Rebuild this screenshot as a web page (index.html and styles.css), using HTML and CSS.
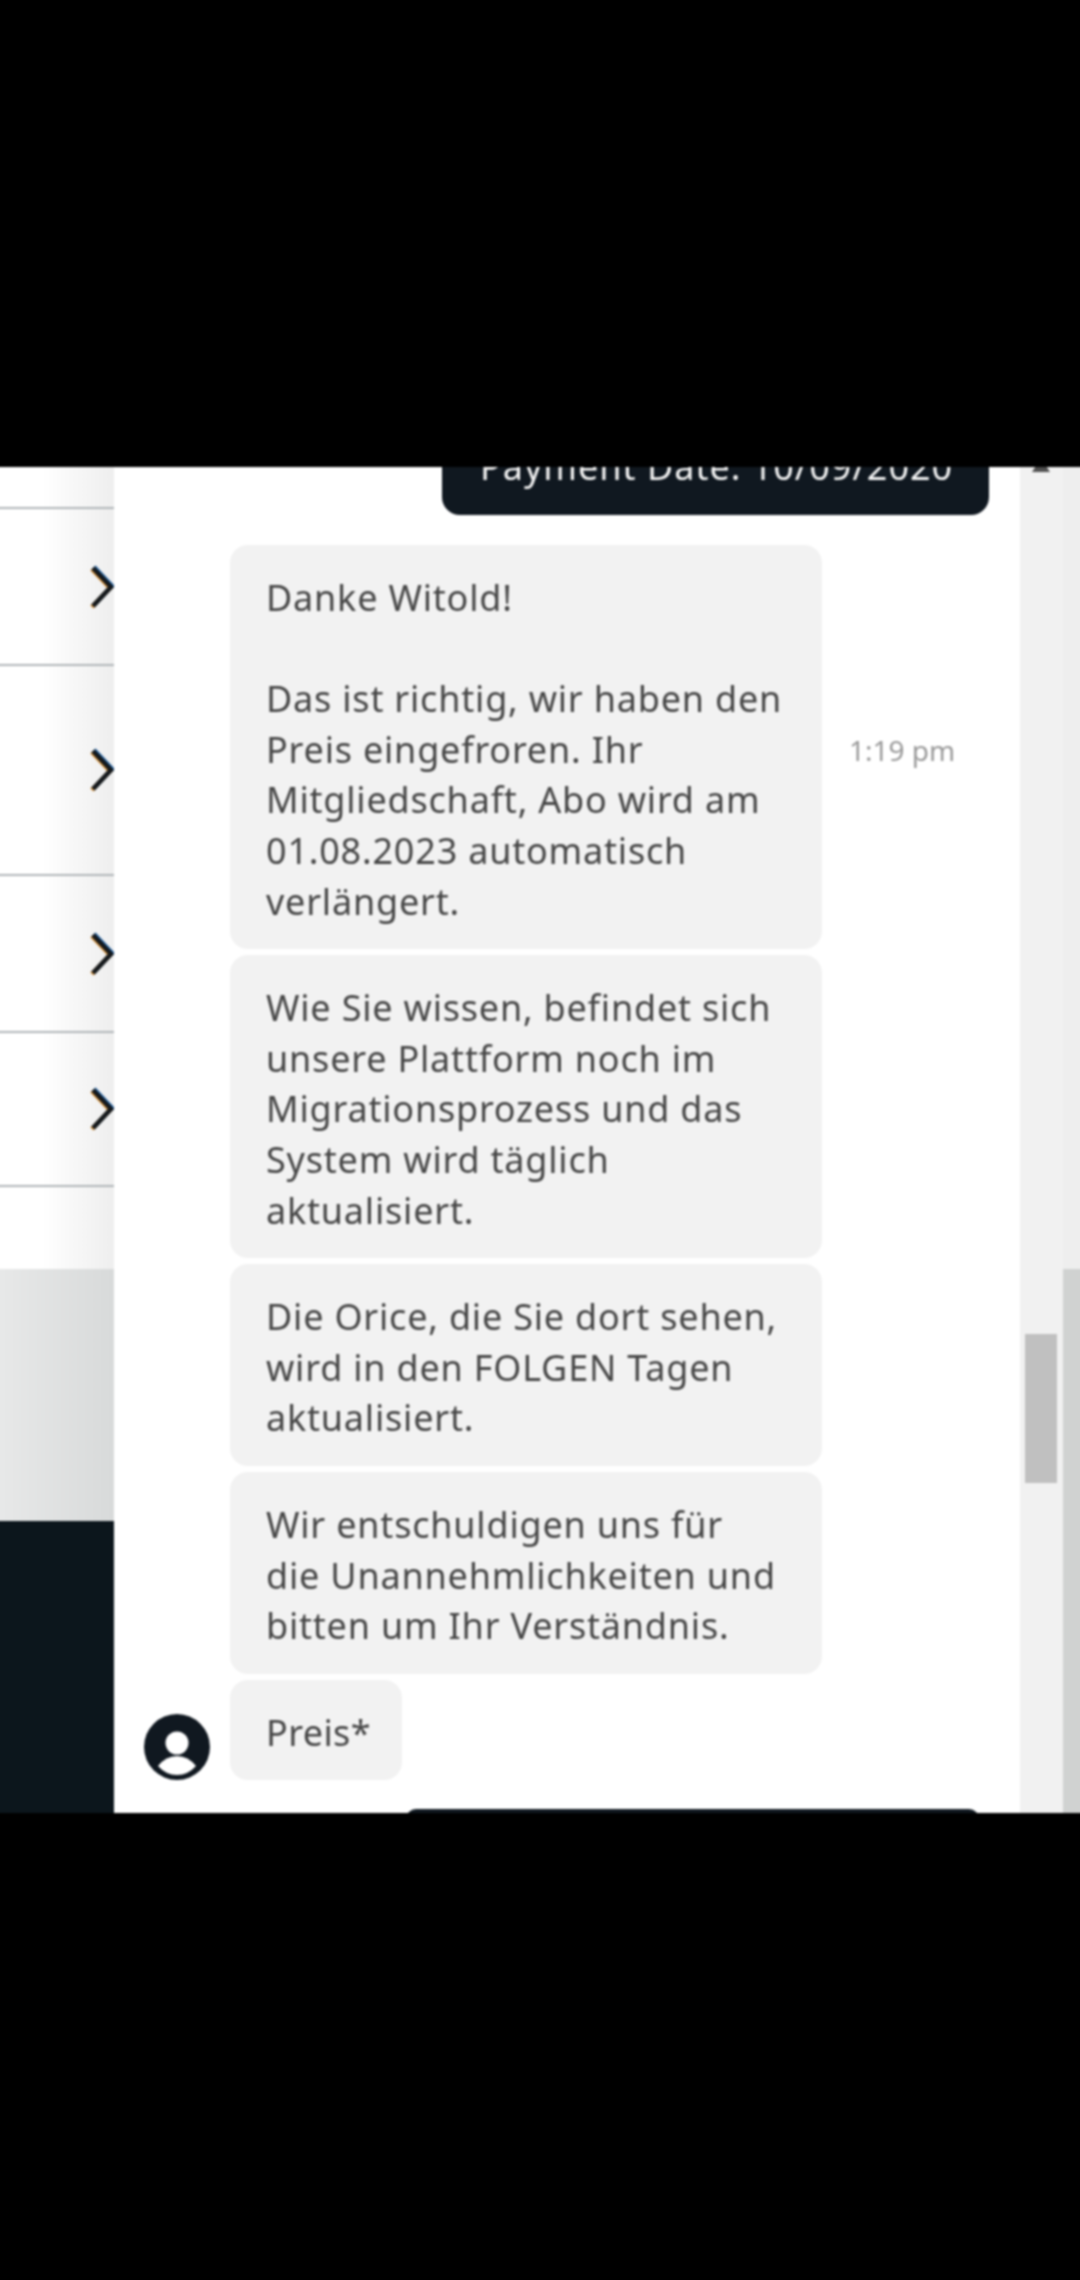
FILE: index.html
```html
<!DOCTYPE html>
<html lang="de">
<head>
    <meta charset="UTF-8">
    <meta name="viewport" content="width=device-width, initial-scale=1.0">
    <title>Chat</title>
    <link rel="stylesheet" href="styles.css">
</head>
<body>
    <div class="screen">
        <!-- Left list, cut off by the chat window -->
        <aside class="side">
            <div class="side-list">
                <div class="side-row row-first"></div>
                <div class="side-row row-a"><svg class="chevron" viewBox="0 0 24 44"><path d="M3 3 L21 22 L3 41"/></svg></div>
                <div class="side-row row-b"><svg class="chevron" viewBox="0 0 24 44"><path d="M3 3 L21 22 L3 41"/></svg></div>
                <div class="side-row row-a"><svg class="chevron" viewBox="0 0 24 44"><path d="M3 3 L21 22 L3 41"/></svg></div>
                <div class="side-row row-c"><svg class="chevron" viewBox="0 0 24 44"><path d="M3 3 L21 22 L3 41"/></svg></div>
            </div>
            <div class="side-grey"></div>
            <div class="side-dark"></div>
        </aside>

        <main class="chat">
            <div class="messages">
                <div class="bubble-own top-own">Payment Date: 10/09/2020</div>

                <div class="row">
                    <div class="bubble">Danke Witold!<br><br>Das ist richtig, wir haben den Preis eingefroren. Ihr Mitgliedschaft, Abo wird am 01.08.2023 automatisch verlängert.</div>
                    <span class="time">1:19 pm</span>
                </div>
                <div class="row">
                    <div class="bubble">Wie Sie wissen, befindet sich unsere Plattform noch im Migrationsprozess und das System wird täglich aktualisiert.</div>
                </div>
                <div class="row">
                    <div class="bubble">Die Orice, die Sie dort sehen, wird in den FOLGEN Tagen aktualisiert.</div>
                </div>
                <div class="row">
                    <div class="bubble">Wir entschuldigen uns für<br>die Unannehmlichkeiten und bitten um Ihr Verständnis.</div>
                </div>
                <div class="row">
                    <svg class="avatar" viewBox="0 0 66 66">
                        <circle cx="33" cy="33" r="33" fill="#101820"/>
                        <circle cx="33" cy="29" r="11.5" fill="#fff"/>
                        <path d="M14 52 Q22 42 33 42 Q44 42 52 52 Q44 61 33 61 Q22 61 14 52Z" fill="#fff"/>
                    </svg>
                    <div class="bubble bubble-short">Preis*</div>
                </div>

                <div class="bubble-own bottom-own"></div>
            </div>
        </main>

        <div class="scrollbar">
            <div class="scroll-arrow"></div>
            <div class="scroll-thumb"></div>
        </div>

        <div class="strip">
            <div class="strip-top"></div>
            <div class="strip-bottom"></div>
        </div>
    </div>
</body>
</html>
```

FILE: styles.css
```css
/* Page is a photo of a screen between two black bars */
html, body {
    margin: 0;
    height: 100%;
    background-color: #000;
    overflow: hidden;
}
body {
    padding: 467px 0 467px;
    box-sizing: border-box;
    font-family: "Noto Sans", "Open Sans", sans-serif;
}
/* 6px wider on each side so the blur has no dark edge at the window border */
.screen {
    display: flex;
    height: 100%;
    margin: 0 -6px;
    overflow: hidden;
    background-color: #fff;
    filter: blur(0.8px);
}

/* Left list */
.side {
    width: 120px;
    flex-shrink: 0;
    display: flex;
    flex-direction: column;
    overflow: hidden;
}
.side-list {
    height: 802px;
    background: linear-gradient(to right, #fff 40%, #eeeeee 100%);
}
.side-row {
    display: flex;
    align-items: center;
    justify-content: flex-end;
    box-sizing: border-box;
    border-bottom: 2px solid #b0b5b8;
}
.row-first { height: 42px; }
.row-a { height: 157px; }
.row-b { height: 210px; }
.row-c { height: 154px; }
.chevron {
    width: 24px;
    height: 44px;
    flex-shrink: 0;
    filter: drop-shadow(-1px 1px 0 #d08a30) drop-shadow(1px -1px 0 #1f5fa0);
}
.chevron path {
    fill: none;
    stroke: #14181c;
    stroke-width: 4.5;
}
.side-grey {
    height: 252px;
    background: linear-gradient(to right, #e8e9e9, #d8dada);
}
.side-dark {
    flex: 1;
    background-color: #0c161c;
}

/* Chat column */
.chat {
    flex: 1;
    overflow: hidden;
}
.messages {
    display: flex;
    flex-direction: column;
    gap: 6px;
    margin-top: -60px;
}
.row {
    display: flex;
    align-items: center;
    padding-left: 116px;
    position: relative;
}
.bubble {
    width: 592px;
    box-sizing: border-box;
    padding: 28px 36px 22px;
    background-color: #f2f2f2;
    border-radius: 18px;
    color: #464646;
    font-size: 36px;
    line-height: 50.6px;
    letter-spacing: 0.8px;
}
.bubble-short {
    width: 172px;
    letter-spacing: 0.4px;
}
.time {
    margin: 6px 0 0 27px;
    color: #999;
    font-size: 28px;
}
.avatar {
    position: absolute;
    left: 30px;
    bottom: 0;
    width: 66px;
    height: 66px;
}
.bubble-own {
    background-color: #101820;
    color: #f4f4f4;
    font-size: 36px;
    line-height: 50px;
    letter-spacing: 1px;
    border-radius: 18px;
    box-sizing: border-box;
    white-space: nowrap;
}
.top-own {
    width: 547px;
    height: 108px;
    margin: 0 0 24px 328px;
    padding: 35px 38px 0;
}
.bottom-own {
    width: 573px;
    height: 80px;
    margin: 23px 0 0 292px;
    border-radius: 10px;
}

/* Scrollbar */
.scrollbar {
    width: 43px;
    flex-shrink: 0;
    background-color: #f1f1f1;
    position: relative;
}
.scroll-arrow {
    position: absolute;
    left: 12px;
    top: -9px;
    width: 0;
    height: 0;
    border-left: 9px solid transparent;
    border-right: 9px solid transparent;
    border-bottom: 14px solid #505050;
}
.scroll-thumb {
    position: absolute;
    left: 5px;
    top: 867px;
    width: 32px;
    height: 149px;
    background-color: #c0c0c0;
}
.strip {
    width: 23px;
    flex-shrink: 0;
    display: flex;
    flex-direction: column;
}
.strip-top {
    height: 802px;
    background-color: #eeeeee;
}
.strip-bottom {
    flex: 1;
    background-color: #d0d2d1;
}
```
